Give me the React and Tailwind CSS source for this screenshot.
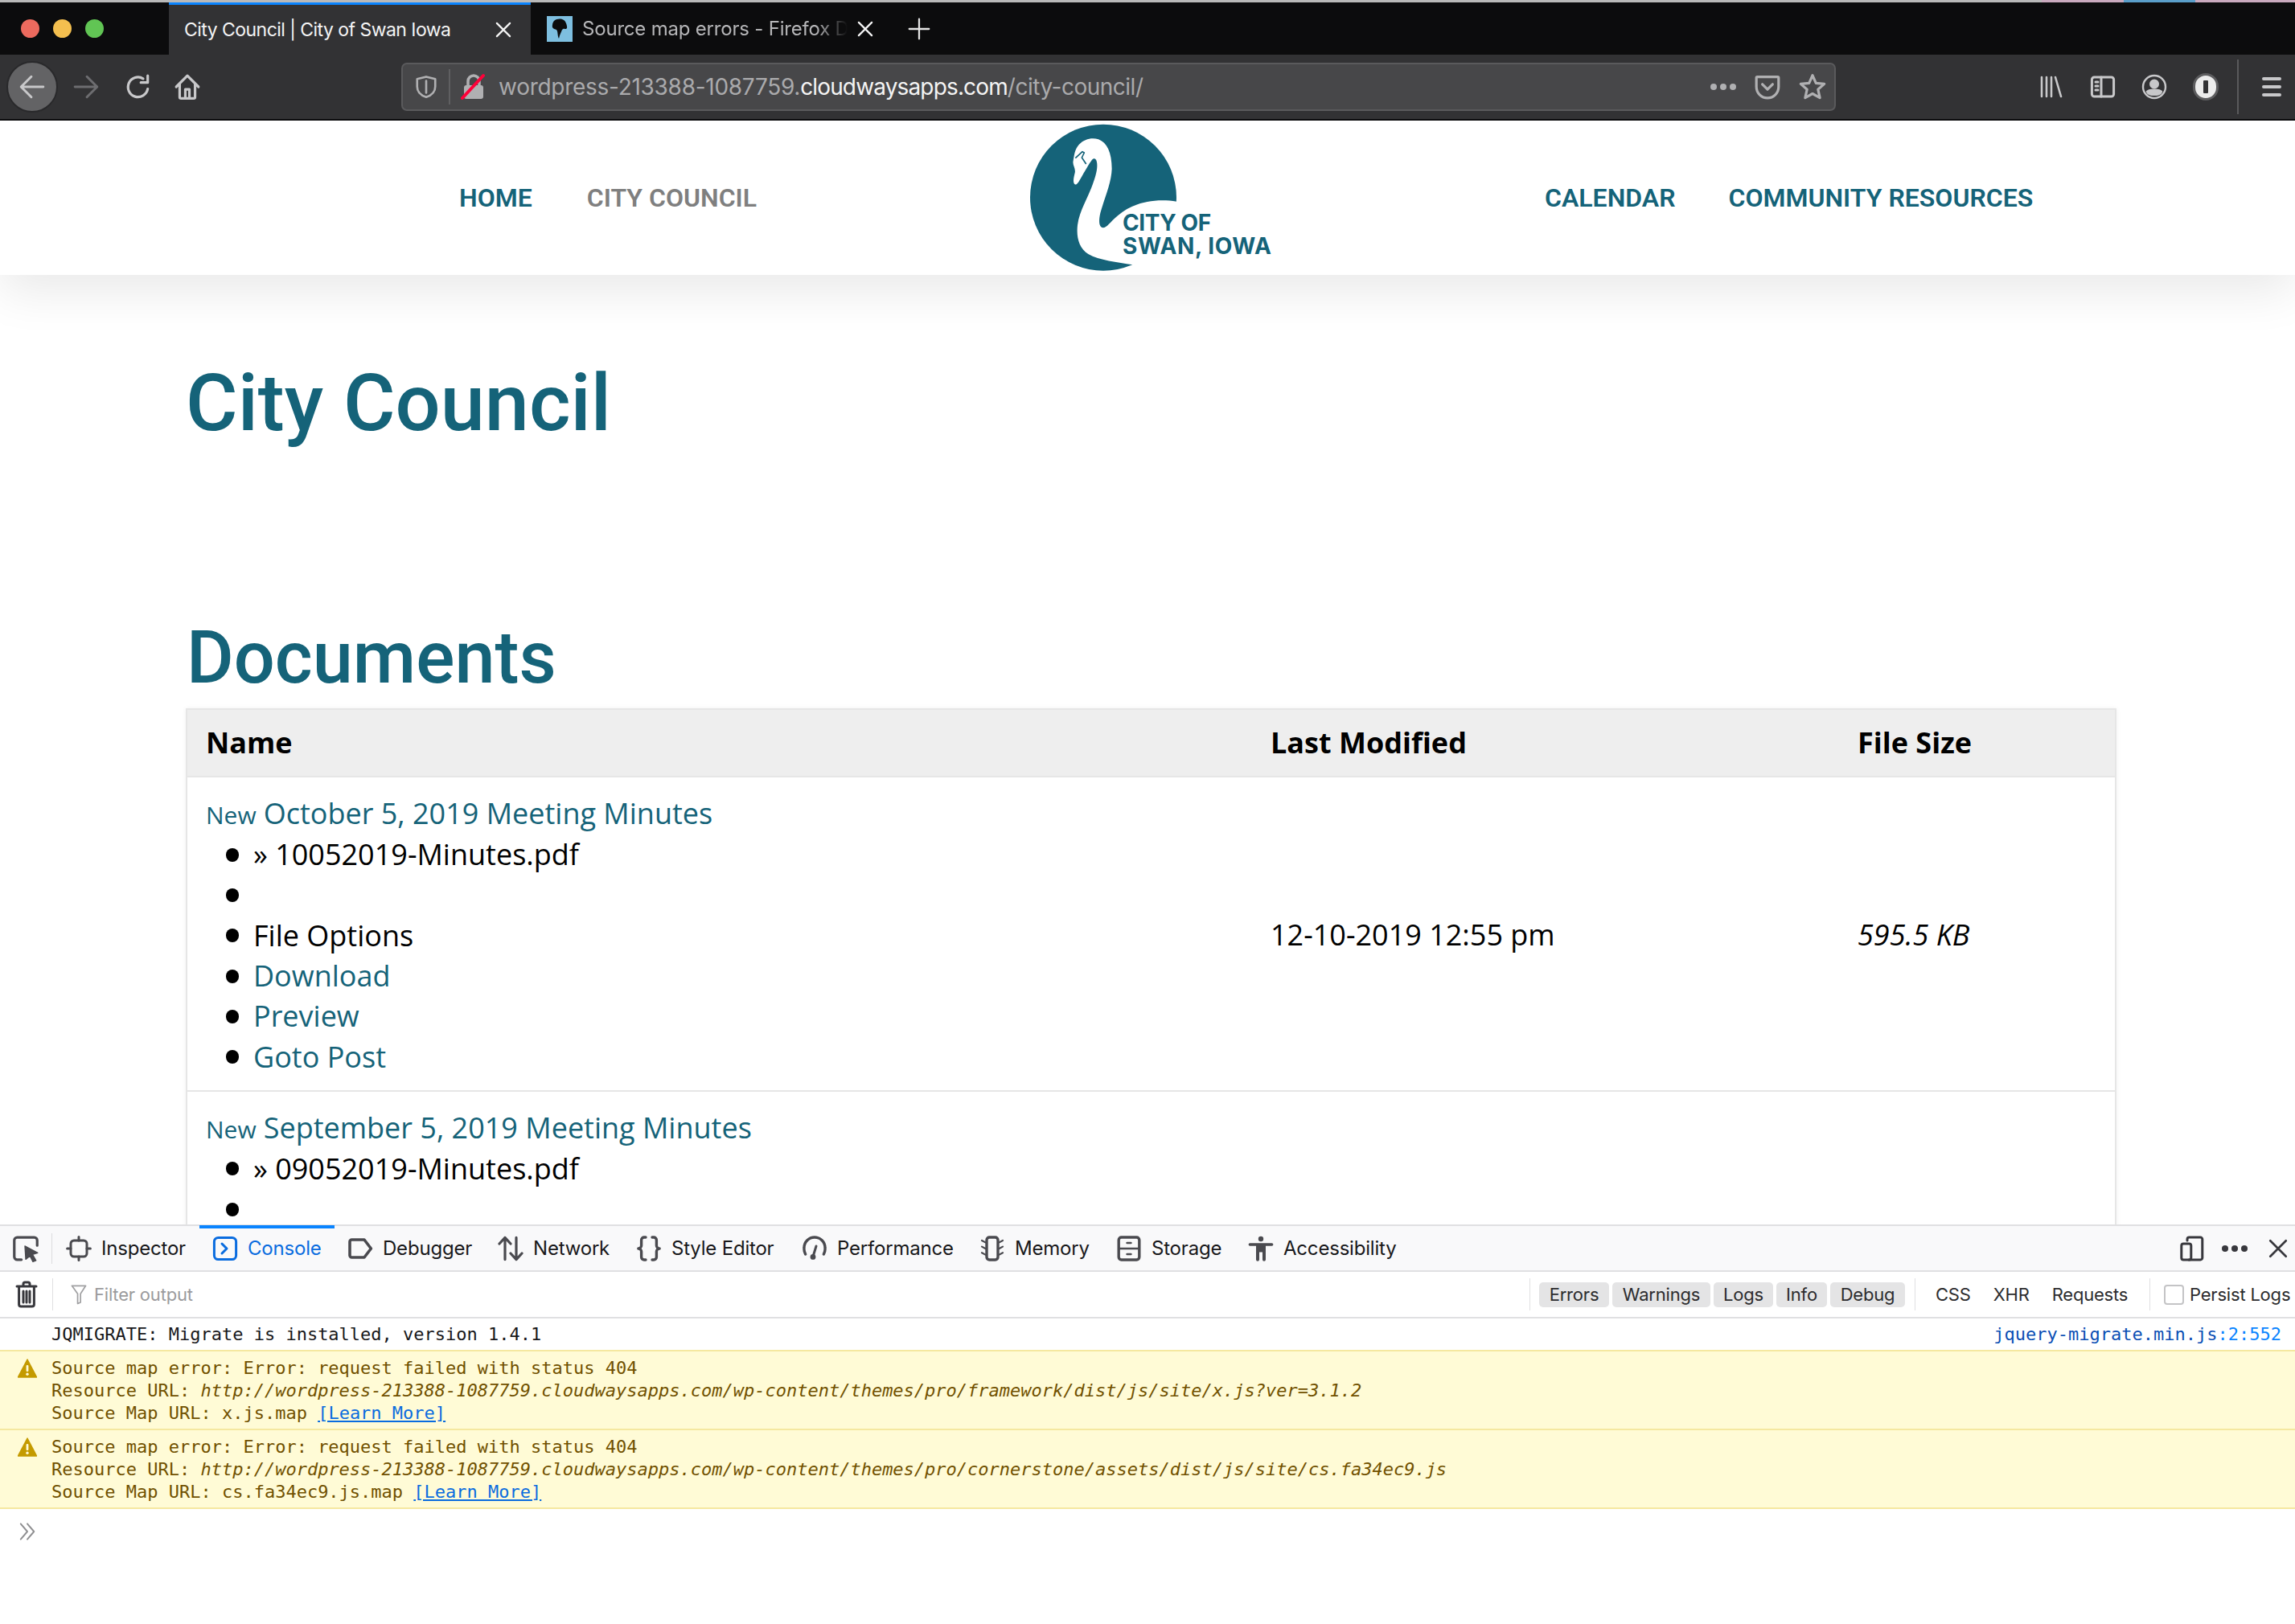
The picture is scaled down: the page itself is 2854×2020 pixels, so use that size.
import React from "react";

const Stroke = ({ w, h = w, vb = "0 0 16 16", children, className = "", sw = 1.5 }) => (
  <svg width={w} height={h} viewBox={vb} fill="none" stroke="currentColor" strokeWidth={sw} strokeLinecap="round" strokeLinejoin="round" className={"shrink-0 " + className}>
    {children}
  </svg>
);

const X = ({ s = 20, className = "" }) => (
  <Stroke w={s} vb="0 0 16 16" sw={1.8} className={className}><path d="M1.5 1.5l13 13M14.5 1.5l-13 13" /></Stroke>
);

function TabBar() {
  return (
    <div className="h-[68px] bg-[#0c0c0d] flex flex-col shrink-0">
      <div className="h-[3px] flex bg-[#b9b9b9] shrink-0">
        <div className="ml-[2539px] w-[102px] bg-[#c9a9bd]" />
        <div className="w-[89px] bg-[#5a9ec9]" />
        <div className="flex-1 bg-[#c9a9bd]" />
      </div>
      <div className="flex-1 flex">
        <div className="w-[210px] flex items-center pl-[26px] gap-[17px]">
          <div className="w-[23px] h-[23px] rounded-full bg-[#ec6a5e]" />
          <div className="w-[23px] h-[23px] rounded-full bg-[#f4bf4f]" />
          <div className="w-[23px] h-[23px] rounded-full bg-[#61c554]" />
        </div>
        <div className="w-[450px] bg-[#323234] border-t-[3px] border-[#0a84ff] flex items-center pl-[19px] pr-[24px] text-[#f4f4f4] text-[23px]">
          <span className="flex-1 whitespace-nowrap tracking-[-0.54px]">City Council | City of Swan Iowa</span>
          <X className="text-[#f4f4f4]" />
        </div>
        <div className="w-[438px] flex items-center pl-[20px] pr-[12px] text-[#b6b6b8] text-[24px]">
          <div className="w-[32px] h-[32px] bg-[#7ebfe0] flex items-center justify-center shrink-0 mr-[12px]">
            <svg width="22" height="28" viewBox="0 0 22 28"><path d="M4 4c5-4 13-3 15 3 1 3 2 6 0 7-2 0-3-1-5 1-1 3-3 6-4 11-2-4-1-9-3-11-3-1-6-2-5-6 0-2 1-4 2-5z" fill="#0c0c0d" /></svg>
          </div>
          <span className="w-[330px] overflow-hidden whitespace-nowrap tracking-[-0.2px] [mask-image:linear-gradient(to_right,black_88%,transparent)]">Source map errors - Firefox Developer</span>
          <X className="text-[#f4f4f4] ml-[12px]" />
        </div>
        <div className="ml-[31px] flex items-center text-[#e4e4e4]">
          <Stroke w={28} vb="0 0 16 16" sw={1.3}><path d="M8 1v14M1 8h14" /></Stroke>
        </div>
      </div>
    </div>
  );
}

function Toolbar() {
  return (
    <div className="h-[82px] bg-[#323234] border-b-[2px] border-[#0c0c0d] flex items-center shrink-0 text-[#c8c8ca]">
      <div className="ml-[8px] w-[64px] h-[64px] rounded-full bg-[#636365] border-[2px] border-[#29292b] flex items-center justify-center">
        <Stroke w={34} sw={1.4}><path d="M14.5 8H1.8M7.5 2L1.5 8l6 6" /></Stroke>
      </div>
      <Stroke w={34} sw={1.4} className="ml-[18px] text-[#6d6d70]"><path d="M1.5 8h12.7M8.5 2l6 6-6 6" /></Stroke>
      <Stroke w={34} sw={1.5} className="ml-[31px]"><path d="M13.5 9.2A5.8 5.8 0 1 1 10.8 3.2M13.5 1.5v4h-4" /></Stroke>
      <Stroke w={34} sw={1.5} className="ml-[27px]"><path d="M1.5 8L8 1.5 14.5 8M3.5 6.5V14a.8.8 0 0 0 .8.8h7.4a.8.8 0 0 0 .8-.8V6.5M6.8 14.5V9.5h2.4v5" /></Stroke>

      <div className="ml-[249px] w-[1784px] h-[60px] rounded-[7px] bg-[#474749] border-[2px] border-[#5a5a5c] flex items-center text-[28px] whitespace-nowrap">
        <Stroke w={30} sw={1.4} className="ml-[14px] text-[#b0b0b2]"><path d="M8 1.3l6 1.5v5c0 3.4-2.5 5.8-6 7-3.5-1.2-6-3.6-6-7v-5l6-1.5zM8 4v8" /></Stroke>
        <div className="w-[2px] h-[44px] bg-[#5f5f61] ml-[13px]" />
        <svg width="32" height="34" viewBox="0 0 32 34" className="ml-[13px] shrink-0">
          <rect x="4" y="15" width="24" height="17" rx="3" fill="#b0b0b2" />
          <path d="M9 15V10a7 7 0 0 1 14 0v5" fill="none" stroke="#b0b0b2" strokeWidth="3.5" />
          <path d="M2 31L28 3" stroke="#ff0039" strokeWidth="4" strokeLinecap="round" />
        </svg>
        <span className="ml-[15px] text-[#aaaaac] tracking-[-0.28px]">wordpress-213388-1087759.<span className="text-[#f4f4f4] tracking-[-0.85px]">cloudwaysapps.com</span><span className="tracking-[-0.5px]">/city-council/</span></span>
        <div className="flex-1" />
        <div className="flex gap-[4px] mr-[22px]">
          <div className="w-[8px] h-[8px] rounded-full bg-[#b0b0b2]" />
          <div className="w-[8px] h-[8px] rounded-full bg-[#b0b0b2]" />
          <div className="w-[8px] h-[8px] rounded-full bg-[#b0b0b2]" />
        </div>
        <Stroke w={34} sw={1.5} className="text-[#b0b0b2]"><path d="M2 2.2h12a.5.5 0 0 1 .5.5v5.3a6.5 6.5 0 0 1-13 0V2.7a.5.5 0 0 1 .5-.5zM5 6.5l3 3 3-3" /></Stroke>
        <Stroke w={34} sw={1.5} className="ml-[22px] mr-[10px] text-[#b0b0b2]"><path d="M8 1.3l2 4.5 4.9.5-3.7 3.2 1.1 4.9L8 12l-4.3 2.4 1.1-4.9L1.1 6.3 6 5.8z" /></Stroke>
      </div>

      <Stroke w={32} sw={1.3} className="ml-[252px]"><path d="M2 2v12M5 2v12M8 2v12M10.5 2l3.5 12" /></Stroke>
      <Stroke w={32} sw={1.5} className="ml-[32px]"><rect x="1.2" y="2" width="13.6" height="12" rx="1.5" /><path d="M7 2v12M3.5 5h1.5M3.5 7.5h1.5M3.5 10h1.5" /></Stroke>
      <Stroke w={32} sw={1.2} className="ml-[32px]"><circle cx="8" cy="8" r="7" /><circle cx="8" cy="6.2" r="2.4" fill="currentColor" /><path d="M3.5 11c1-1.6 8-1.6 9 0-1 2.6-8 2.6-9 0z" fill="currentColor" /></Stroke>
      <div className="ml-[32px] w-[32px] h-[34px] rounded-full bg-[#ececec] border-[3px] border-[#5d5d5f] flex items-center justify-center shrink-0">
        <div className="w-[6px] h-[16px] bg-[#323234] rounded-[1px]" />
      </div>
      <div className="ml-[23px] w-[2px] h-[68px] bg-[#5a5a5c]" />
      <div className="ml-[29px] flex flex-col gap-[6px]">
        <div className="w-[24px] h-[4px] rounded bg-[#c8c8ca]" />
        <div className="w-[24px] h-[4px] rounded bg-[#c8c8ca]" />
        <div className="w-[24px] h-[4px] rounded bg-[#c8c8ca]" />
      </div>
    </div>
  );
}

function Logo() {
  return (
    <div className="relative w-[450px] h-[192px] shrink-0">
      <svg width="450" height="192" viewBox="0 30 1350 576" className="block">
        <circle cx="516" cy="317" r="273" fill="#156379" />
        <path fill="#fff" d="M410 268C402 262 405 245 410 225C414 208 400 195 404 180C408 160 408 140 425 120C445 98 475 92 498 100C530 112 548 150 548 210C546 265 520 320 505 375C498 405 500 428 515 430C530 430 540 410 570 385C620 340 700 318 790 332L800 600L625 568C570 558 500 552 460 528C425 505 415 465 420 420C426 370 455 325 472 280C485 245 497 210 492 185C490 172 482 168 474 176C462 192 448 218 432 245C424 260 416 272 410 268Z" />
        <path d="M412 170L438 146L445 150L436 168L452 192" fill="none" stroke="#156379" strokeWidth="5" strokeLinejoin="round" />
      </svg>
      <div className="absolute left-[196px] top-[113px] font-['Inter'] font-bold text-[28px] leading-[29px] text-[#156379] whitespace-nowrap">
        <div className="tracking-[-0.4px]">CITY OF</div>
        <div className="tracking-[0.6px]">SWAN, IOWA</div>
      </div>
    </div>
  );
}

function Header() {
  return (
    <div className="relative z-10 h-[192px] bg-white shadow-[0_20px_56px_rgba(0,0,0,0.09)] flex font-['Roboto'] font-semibold text-[32px] text-[#156379] whitespace-nowrap shrink-0">
      <div className="w-[1200px] pl-[571px] flex items-center gap-[68px]">
        <span>HOME</span>
        <span className="text-[#7f7f7f]">CITY COUNCIL</span>
      </div>
      <Logo />
      <div className="pl-[271px] flex items-center gap-[66px]">
        <span>CALENDAR</span>
        <span>COMMUNITY RESOURCES</span>
      </div>
    </div>
  );
}

const Li = ({ children, link }) => (
  <li className={"flex items-center h-[50.3px] " + (link ? "text-[#156379]" : "")}>
    <span className="w-[16px] h-[17px] rounded-full bg-black mr-[18px] shrink-0" />
    {children}
  </li>
);

function Row({ title, file, date, size }) {
  return (
    <tr className="border-t-[2px] border-[#e6e6e6]">
      <td className="pl-[23px] pt-[18px] pb-[16px] align-middle">
        <div className="h-[53px] text-[#156379] flex items-baseline whitespace-nowrap">
          <span className="text-[30px] mr-[9px]">New</span>
          <span>{title}</span>
        </div>
        <ul className="pl-[25px]">
          <Li>» {file}</Li>
          <Li />
          <Li>File Options</Li>
          <Li link>Download</Li>
          <Li link>Preview</Li>
          <Li link>Goto Post</Li>
        </ul>
      </td>
      <td className="align-middle whitespace-nowrap pt-[4px]">{date}</td>
      <td className="align-middle italic whitespace-nowrap pt-[4px]">{size}</td>
    </tr>
  );
}

function Page() {
  return (
    <div className="flex-1 min-h-0 overflow-hidden bg-white flex flex-col">
      <Header />
      <div className="pl-[231px] w-[2633px] font-['Roboto'] font-medium text-[#156379]">
        <h1 className="text-[99px] leading-[120px] mt-[99px]">City Council</h1>
        <h2 className="text-[90px] leading-[110px] mt-[203px] ml-[1px]">Documents</h2>
        <table className="mt-[7px] w-[2401px] table-fixed border-collapse border-[2px] border-[#e6e6e6] font-['Open_Sans'] font-normal text-[36px] text-black shadow-[0_0_6px_rgba(0,0,0,0.06)]">
          <colgroup>
            <col className="w-[1348px]" />
            <col className="w-[730px]" />
            <col />
          </colgroup>
          <thead>
            <tr className="h-[84px] bg-[#eeeeee] text-[36px] text-left">
              <th className="pl-[23px] font-bold">Name</th>
              <th className="font-bold">Last Modified</th>
              <th className="font-bold">File Size</th>
            </tr>
          </thead>
          <tbody>
            <Row title="October 5, 2019 Meeting Minutes" file="10052019-Minutes.pdf" date="12-10-2019 12:55 pm" size="595.5 KB" />
            <Row title="September 5, 2019 Meeting Minutes" file="09052019-Minutes.pdf" date="12-10-2019 12:55 pm" size="595.5 KB" />
          </tbody>
        </table>
      </div>
    </div>
  );
}

const icons = {
  Inspector: <><rect x="3" y="3" width="10" height="10" rx="2" /><path d="M8 .8V3M8 13v2.2M.8 8H3M13 8h2.2" /></>,
  Console: <><rect x="1.2" y="1.2" width="13.6" height="13.6" rx="2.5" /><path d="M6 5l3 3-3 3" /></>,
  Debugger: <path d="M2.7 2.5h7.8l4.2 5.5-4.2 5.5H2.7a1.2 1.2 0 0 1-1.2-1.2V3.7a1.2 1.2 0 0 1 1.2-1.2z" strokeWidth="1.8" />,
  Network: <path d="M4.5 14.8V1.2M1 5l3.5-3.8L8 5M11.5 1.2v13.6M8 11l3.5 3.8L15 11" strokeWidth="1.6" />,
  "Style Editor": <path d="M6 1H5A1.7 1.7 0 0 0 3.3 2.7v3.4A1.9 1.9 0 0 1 1.4 8a1.9 1.9 0 0 1 1.9 1.9v3.4A1.7 1.7 0 0 0 5 15h1M10 1h1a1.7 1.7 0 0 1 1.7 1.7v3.4A1.9 1.9 0 0 0 14.6 8a1.9 1.9 0 0 0-1.9 1.9v3.4A1.7 1.7 0 0 1 11 15h-1" strokeWidth="1.7" />,
  Performance: <><path d="M2.3 11.5A7 7 0 0 1 1.5 7.5a6.5 6.5 0 0 1 13 0 7 7 0 0 1-.8 4" strokeWidth="1.7" /><path d="M7 13l2-6.5" /><circle cx="7" cy="13.2" r="1.7" fill="currentColor" stroke="none" /></>,
  Memory: <><rect x="4.5" y="1" width="7" height="14" rx="1.7" strokeWidth="1.7" /><path d="M1.5 3l2.2 1.2M1.5 6.8L3.7 8M1.5 10.6l2.2 1.2M14.5 3l-2.2 1.2M14.5 6.8L12.3 8M14.5 10.6l-2.2 1.2" strokeWidth="1.1" /></>,
  Storage: <><rect x="1.6" y="1" width="12.8" height="14" rx="1.7" strokeWidth="1.7" /><path d="M1.6 8h12.8M6.8 4.5h2.4M6.8 11.5h2.4" strokeWidth="1.3" /></>,
  Accessibility: <><circle cx="8" cy="2" r="1.6" fill="currentColor" stroke="none" /><path fill="currentColor" stroke="none" d="M1.2 4.6h13.6a.9.9 0 0 1 0 1.8H11v8.5a1 1 0 0 1-2 0V10.2H7v4.7a1 1 0 0 1-2 0V6.4H1.2a.9.9 0 0 1 0-1.8z" /></>,
};

const tabs = [
  ["Inspector", "w-[182px]"],
  ["Console", "w-[168px]"],
  ["Debugger", "w-[187px]"],
  ["Network", "w-[172px]"],
  ["Style Editor", "w-[206px]"],
  ["Performance", "w-[221px]"],
  ["Memory", "w-[170px]"],
  ["Storage", "w-[164px]"],
  ["Accessibility", "w-[200px]"],
];

function DevTabs() {
  return (
    <div className="h-[57px] bg-[#f9f9fa] border-b-[2px] border-[#e0e0e2] flex items-stretch shrink-0 text-[24px] text-[#18181a] tracking-[-0.2px] whitespace-nowrap">
      <Stroke w={34} sw={1.5} className="ml-[15px] self-center text-[#4a4a4f]"><path d="M5.5 14.5H3A1.7 1.7 0 0 1 1.3 12.8V3.2A1.7 1.7 0 0 1 3 1.5h10a1.7 1.7 0 0 1 1.7 1.7v3" /><path d="M7.5 6.5l7.5 4-3 1 2 3.5-1.8.7-1.7-3.4-2.5 2z" fill="currentColor" strokeWidth="0.6" /></Stroke>
      <div className="ml-[15px] w-[1px] h-[38px] self-center bg-[#dcdcde]" />
      <div className="flex ml-[1px]">
        {tabs.map(([name, width]) => {
          const active = name === "Console";
          return (
            <div key={name} className={"relative flex items-center pl-[16px] " + width + " " + (active ? "text-[#0a6cdf]" : "")}>
              {active && <div className="absolute top-[-1px] left-0 right-0 h-[4px] bg-[#0a84ff]" />}
              <div className="w-[44px] shrink-0">
                <Stroke w={32} h={32} sw={1.5} className={active ? "text-[#0a6cdf]" : "text-[#4a4a4f]"}>{icons[name]}</Stroke>
              </div>
              <span>{name}</span>
            </div>
          );
        })}
      </div>
      <div className="flex-1" />
      <div className="flex items-center text-[#38383d]">
        <Stroke w={32} sw={1.5}><path d="M5 3V2.2A1.2 1.2 0 0 1 6.2 1h7A1.2 1.2 0 0 1 14.4 2.2v11.6a1.2 1.2 0 0 1-1.2 1.2H6" /><rect x="1.4" y="5" width="6" height="10" rx="1.2" /></Stroke>
        <div className="ml-[21px] flex gap-[4px]">
          <div className="w-[8px] h-[8px] rounded-full bg-[#38383d]" />
          <div className="w-[8px] h-[8px] rounded-full bg-[#38383d]" />
          <div className="w-[8px] h-[8px] rounded-full bg-[#38383d]" />
        </div>
        <X s={24} className="ml-[26px] mr-[9px]" />
      </div>
    </div>
  );
}

const Pill = ({ w, children }) => (
  <div className={"h-[31px] rounded-[5px] bg-[#e4e4e5] flex items-center justify-center " + w}>{children}</div>
);

function FilterBar() {
  return (
    <div className="h-[58px] bg-white border-b-[2px] border-[#e0e0e2] flex items-center shrink-0 text-[22px] text-[#2c2c2e] whitespace-nowrap tracking-[-0.2px]">
      <Stroke w={28} h={34} vb="0 0 14 17" sw={1.5} className="ml-[19px] text-[#38383d]"><path d="M1 3.5h12M5 3.5V2a1 1 0 0 1 1-1h2a1 1 0 0 1 1 1v1.5M2.3 3.5v11.2A1.3 1.3 0 0 0 3.6 16h6.8a1.3 1.3 0 0 0 1.3-1.3V3.5M5 6.5v7M7 6.5v7M9 6.5v7" /></Stroke>
      <div className="ml-[18px] w-[1px] h-[40px] bg-[#e0e0e2]" />
      <Stroke w={20} h={28} vb="0 0 14 18" sw={1.2} className="ml-[22px] text-[#a0a0a2]"><path d="M1 1.5h12L8.5 8.5V16L6 17V8.5z" /></Stroke>
      <span className="ml-[9px] text-[#9b9b9d]">Filter output</span>
      <div className="flex-1" />
      <div className="w-[952px] shrink-0 flex items-center">
        <div className="w-[1px] h-[40px] bg-[#e0e0e2]" />
        <div className="ml-[11px] flex gap-[4px]">
          <Pill w="w-[87px]">Errors</Pill>
          <Pill w="w-[122px]">Warnings</Pill>
          <Pill w="w-[74px]">Logs</Pill>
          <Pill w="w-[63px]">Info</Pill>
          <Pill w="w-[93px]">Debug</Pill>
        </div>
        <div className="ml-[12px] w-[1px] h-[40px] bg-[#e0e0e2]" />
        <div className="w-[291px] pl-[25px] flex gap-[28px]">
          <span>CSS</span>
          <span>XHR</span>
          <span>Requests</span>
        </div>
        <div className="w-[1px] h-[40px] bg-[#e0e0e2]" />
        <div className="ml-[17px] w-[25px] h-[25px] rounded-[4px] border-[2px] border-[#c4c4c6] bg-white" />
        <span className="ml-[7px]">Persist Logs</span>
      </div>
    </div>
  );
}

const WarnIcon = () => (
  <svg width="24" height="24" viewBox="0 0 24 24" className="absolute left-[22px] top-[9px]">
    <path d="M12 1L23.5 23H.5z" fill="#c49a00" stroke="#c49a00" strokeWidth="1.5" strokeLinejoin="round" />
    <rect x="10.6" y="8" width="2.8" height="8" rx="1" fill="#fffbd6" />
    <circle cx="12" cy="19.3" r="1.7" fill="#fffbd6" />
  </svg>
);

function Warning({ url, map }) {
  return (
    <div className="relative h-[98px] bg-[#fffbd6] border-b-[2px] border-[#f5e8a0] pl-[64px] pt-[7px] text-[#715100] leading-[28px]">
      <WarnIcon />
      <div>Source map error: Error: request failed with status 404</div>
      <div>Resource URL: <i>{url}</i></div>
      <div>Source Map URL: {map} <span className="text-[#0a6cdf] underline">[Learn More]</span></div>
    </div>
  );
}

function Console() {
  return (
    <div className="flex-1 bg-white font-['DejaVu_Sans_Mono'] text-[22px] whitespace-nowrap overflow-hidden">
      <div className="h-[41px] border-b-[2px] border-[#f5e8a0] pl-[64px] pr-[17px] flex items-center justify-between text-[#18181a]">
        <span>JQMIGRATE: Migrate is installed, version 1.4.1</span>
        <span className="text-[#0a4fb5]">jquery-migrate.min.js<span className="text-[#0a84ff]">:2:552</span></span>
      </div>
      <Warning url="http://wordpress-213388-1087759.cloudwaysapps.com/wp-content/themes/pro/framework/dist/js/site/x.js?ver=3.1.2" map="x.js.map" />
      <Warning url="http://wordpress-213388-1087759.cloudwaysapps.com/wp-content/themes/pro/cornerstone/assets/dist/js/site/cs.fa34ec9.js" map="cs.fa34ec9.js.map" />
      <div className="border-t-[2px] -mt-[2px] border-[#dcdcde] pl-[23px] pt-[17px]">
        <Stroke w={22} h={22} vb="0 0 16 16" sw={1.4} className="text-[#8f8f91]"><path d="M2 1l6 7-6 7M8 1l6 7-6 7" /></Stroke>
      </div>
    </div>
  );
}

function DevTools() {
  return (
    <div className="h-[497px] flex flex-col border-t-[2px] border-[#e0e0e2] shrink-0">
      <DevTabs />
      <FilterBar />
      <Console />
    </div>
  );
}

export default function App() {
  return (
    <div className="w-[2854px] h-[2020px] flex flex-col overflow-hidden bg-white font-['Inter',sans-serif]">
      <TabBar />
      <Toolbar />
      <Page />
      <DevTools />
    </div>
  );
}
